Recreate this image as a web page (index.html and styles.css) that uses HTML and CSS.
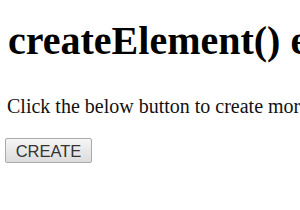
FILE: index.html
```html
<!DOCTYPE html>
<html lang="en">
<head>
    <meta charset="UTF-8">
    <title>createElement() example</title>
    <link rel="stylesheet" href="styles.css">
</head>
<body>
    <h1 class="title">createElement() example</h1>
    <p class="intro">Click the below button to create more buttons</p>
    <button type="button" class="create-btn">CREATE</button>
</body>
</html>
```

FILE: styles.css
```css
html, body {
    overflow: hidden;
}

body {
    margin: 0;
    background: #fff;
    color: #000;
    font-family: "Liberation Serif", "Times New Roman", serif;
    white-space: nowrap;
}

.title {
    font-size: 40px;
    line-height: 46px;
    font-weight: bold;
    margin: 18px 0 0 8px;
}

.intro {
    font-size: 20px;
    line-height: 22px;
    margin: 31px 0 0 7px;
    color: #111;
}

.create-btn {
    display: block;
    margin: 21px 0 0 5px;
    width: 87px;
    height: 25px;
    font-family: "Liberation Sans", Arial, sans-serif;
    font-size: 16.5px;
    line-height: 19px;
    color: #333;
    padding: 3px 0 1px;
    border: 1px solid #aaa;
    border-radius: 2px;
    background: linear-gradient(#f5f5f5, #dcdcdc);
}
```
